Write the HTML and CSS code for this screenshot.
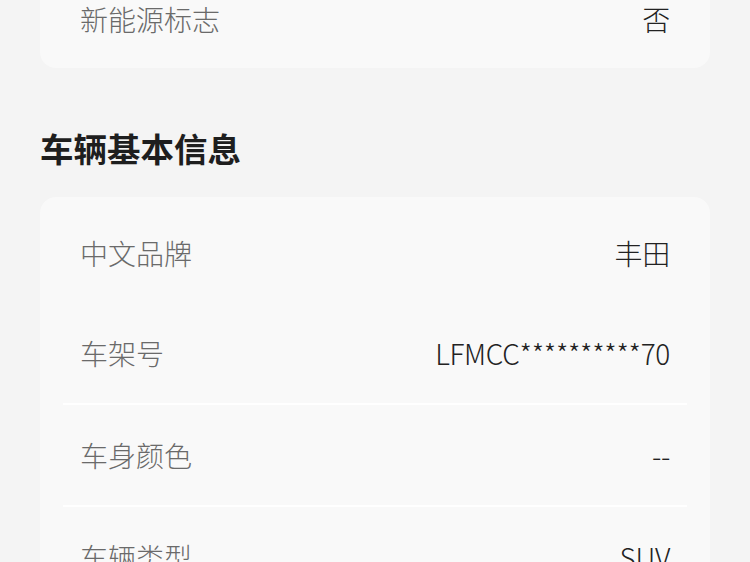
FILE: index.html
```html
<!DOCTYPE html>
<html lang="zh-CN">
<head>
    <meta charset="UTF-8">
    <meta name="viewport" content="width=device-width, initial-scale=1.0">
    <title>车辆信息</title>
    <link rel="stylesheet" href="styles.css">
</head>
<body>
    <div class="page">
        <!-- 上一组信息的最后一行 -->
        <div class="card card-top">
            <div class="row row-short">
                <span class="label">新能源标志</span>
                <span class="value">否</span>
            </div>
        </div>

        <h2 class="section-title">车辆基本信息</h2>
        <div class="card">
            <div class="row">
                <span class="label">中文品牌</span>
                <span class="value">丰田</span>
            </div>
            <div class="row line">
                <span class="label">车架号</span>
                <span class="value">LFMCC**********70</span>
            </div>
            <div class="row line">
                <span class="label">车身颜色</span>
                <span class="value">--</span>
            </div>
            <div class="row">
                <span class="label">车辆类型</span>
                <span class="value">SUV</span>
            </div>
        </div>
    </div>
</body>
</html>
```

FILE: styles.css
```css
body {
    margin: 0;
    padding: 0;
    background-color: #f4f4f4;
    font-family: "Noto Sans CJK SC", "Noto Sans", sans-serif;
    color: #222;
    overflow: hidden;
}

.page {
    padding: 0 40px;
}

.card {
    background-color: #f9f9f9;
    border-radius: 16px;
    padding: 6px 0 0;
}

.card-top {
    margin-top: -30px;
    padding: 0;
    border-radius: 0 0 16px 16px;
}

.section-title {
    margin: 57px 0 27px;
    font-size: 33.5px;
    line-height: 45px;
    font-weight: 700;
    color: #1e1e1e;
}

.row {
    display: flex;
    justify-content: space-between;
    align-items: center;
    height: 100px;
    margin: 0 23px;
    padding: 0 17px;
    font-size: 28px;
}

.row-short {
    height: 98px;
}

.row.line {
    border-bottom: 2px solid #ffffff;
}

.label {
    color: #6a6a6a;
    font-weight: 300;
}

.value {
    color: #222;
    font-weight: 300;
    letter-spacing: -0.3px;
}
```
